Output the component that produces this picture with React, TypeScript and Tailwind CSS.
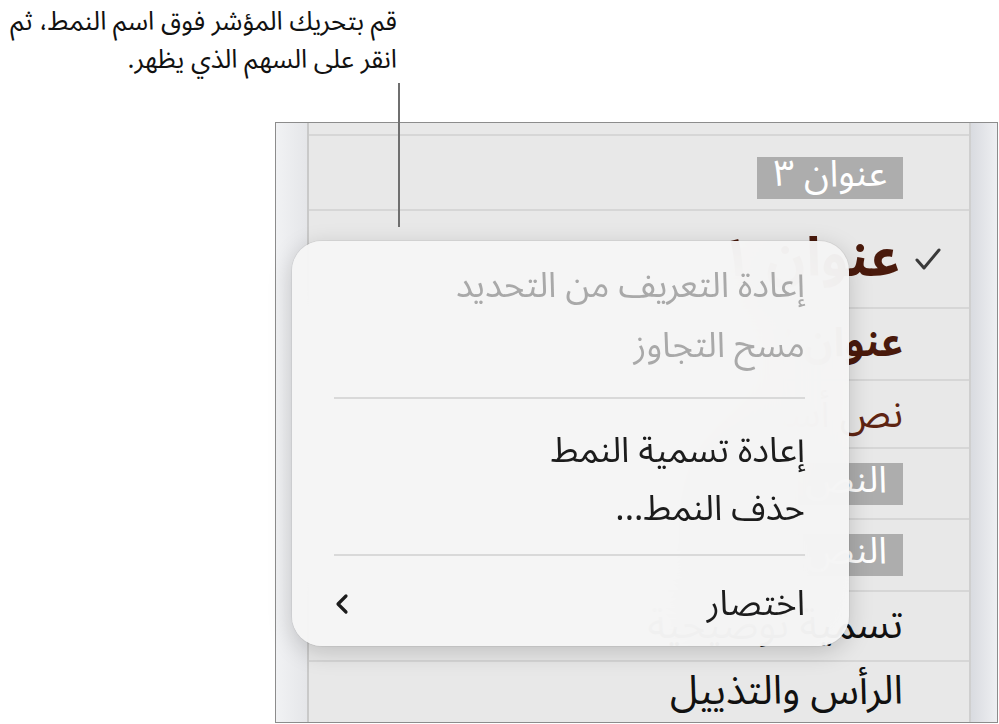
import { ReactNode } from 'react';

const FONT = { fontFamily: '"Noto Sans Arabic", "DejaVu Sans", sans-serif' };

type RowProps = {
  h: string;
  children?: ReactNode;
  last?: boolean;
  pr?: string;
};

// one row of the styles list
function Row({ h, children, last, pr = 'pr-[66px]' }: RowProps) {
  return (
    <div dir="rtl" className={`${h} flex items-center ${pr} ${last ? '' : 'border-b-2 border-[#d6d6d6]'}`}>
      {children}
    </div>
  );
}

function Chip({ children, cls = '' }: { children: ReactNode; cls?: string }) {
  return (
    <span className={`${cls} h-[42px] flex items-center pb-[7px] bg-[#adadad] text-white text-[37px] leading-none px-[16px] whitespace-nowrap`}>
      {children}
    </span>
  );
}

type ItemProps = { label: string; dim?: boolean; chevron?: boolean; h: string };

function MenuItem({ label, dim, chevron, h }: ItemProps) {
  return (
    <div dir="rtl" className={`${h} flex items-center justify-between`}>
      <span className={`text-[35px] leading-none whitespace-nowrap ${dim ? 'text-[#a9a9a9]' : 'text-[#1c1c1c]'}`}>{label}</span>
      {chevron ? (
        <svg width="16" height="22" viewBox="0 0 16 22" className="mr-[-6px]">
          <path d="M12 3 L4 11 L12 19" fill="none" stroke="#1c1c1c" strokeWidth="3.2" strokeLinecap="round" strokeLinejoin="round" />
        </svg>
      ) : null}
    </div>
  );
}

function Sep({ cls }: { cls: string }) {
  return <div className={`${cls} h-[2px] shrink-0 bg-[#d9d9d9]`} />;
}

export default function App() {
  return (
    <div className="relative w-[999px] h-[724px] bg-white overflow-hidden" style={FONT}>
      {/* caption */}
      <div dir="rtl" className="h-[122px] w-[399px] pt-[3px] pr-[2px] text-[26px] leading-[38px] text-[#111] whitespace-nowrap">
        <p>قم بتحريك المؤشر فوق اسم النمط، ثم</p>
        <p>انقر على السهم الذي يظهر.</p>
      </div>

      {/* callout line */}
      <div className="absolute left-[398px] top-[83px] w-[2px] h-[144px] bg-[#6f6f6f]" />

      {/* styles panel */}
      <div className="ml-[275px] w-[723px] h-[601px] border border-[#8c8c8c] flex">
        <div className="w-[33px] bg-gradient-to-r from-[#f1f2f4] to-[#e5e6e9] border-r-2 border-[#c9c9c9]" />
        <div className="flex-1 bg-[#e8e8e8] flex flex-col">
          <Row h="h-[13px]" />
          <Row h="h-[75px]">
            <Chip cls="mt-[10px]">عنوان ٣</Chip>
          </Row>
          <Row h="h-[98px]" pr="pr-[27px]">
            <svg width="28" height="24" viewBox="0 0 28 24" className="ml-[14px]">
              <path d="M3 13 L10 21 L25 3" fill="none" stroke="#3a3a3a" strokeWidth="3" strokeLinecap="round" strokeLinejoin="round" />
            </svg>
            <span className="text-[54px] leading-none font-bold text-[#4a1a0c] whitespace-nowrap">عنوان ١</span>
          </Row>
          <Row h="h-[72px]">
            <span className="text-[40px] leading-none font-bold text-[#4a1a0c] whitespace-nowrap">عنوان ٢</span>
          </Row>
          <Row h="h-[68px]">
            <span className="text-[39px] leading-none text-[#5e2412] whitespace-nowrap">نص أساسي</span>
          </Row>
          <Row h="h-[71px]">
            <Chip>النص المميز</Chip>
          </Row>
          <Row h="h-[72px]">
            <Chip>النص الملون</Chip>
          </Row>
          <Row h="h-[70px]">
            <span className="text-[40px] leading-none text-[#111] whitespace-nowrap">تسمية توضيحية</span>
          </Row>
          <Row h="flex-1" last>
            <span className="text-[40px] leading-none text-[#111] whitespace-nowrap">الرأس والتذييل</span>
          </Row>
        </div>
        <div className="w-[28px] bg-gradient-to-r from-[#d9dbe0] to-[#eeeff2] border-l-2 border-[#cfcfcf]" />
      </div>

      {/* context menu over the list */}
      <div className="absolute left-[292px] top-[241px] w-[557px] h-[405px] rounded-[30px] bg-[#f6f6f6]/95 backdrop-blur-2xl shadow-[0_6px_24px_rgba(0,0,0,0.18),0_0_0_1px_rgba(0,0,0,0.05)] pl-[42px] pr-[44px] pt-[14px] flex flex-col">
        <MenuItem h="h-[62px]" label="إعادة التعريف من التحديد" dim />
        <MenuItem h="h-[58px]" label="مسح التجاوز" dim />
        <Sep cls="mt-[22px] mb-[24px]" />
        <MenuItem h="h-[56px]" label="إعادة تسمية النمط" />
        <MenuItem h="h-[60px]" label="حذف النمط..." />
        <Sep cls="mt-[15px] mb-[16px]" />
        <MenuItem h="h-[64px]" label="اختصار" chevron />
      </div>
    </div>
  );
}
